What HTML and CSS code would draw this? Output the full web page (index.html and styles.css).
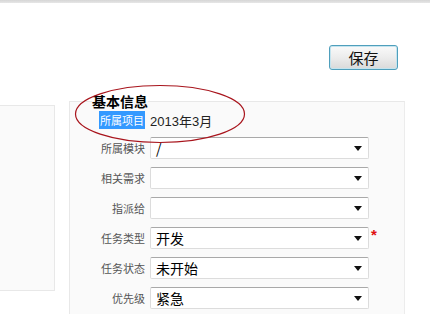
FILE: index.html
```html
<!DOCTYPE html>
<html>
<head>
    <meta charset="UTF-8">
    <title>任务</title>
    <link rel="stylesheet" href="styles.css">
</head>
<body>
    <div class="topbar"></div>
    <div class="toolbar">
        <button class="btn-save">保存</button>
    </div>
    <div class="main">
        <div class="side"></div>
        <fieldset class="panel">
            <legend>基本信息</legend>
            <div class="row first">
                <label><span class="sel">所属项目</span></label>
                <div class="value">2013年3月</div>
            </div>
            <div class="row">
                <label>所属模块</label>
                <div class="select"><span>/</span><i class="caret"></i></div>
            </div>
            <div class="row">
                <label>相关需求</label>
                <div class="select"><span></span><i class="caret"></i></div>
            </div>
            <div class="row">
                <label>指派给</label>
                <div class="select"><span></span><i class="caret"></i></div>
            </div>
            <div class="row">
                <label>任务类型</label>
                <div class="select"><span>开发</span><i class="caret"></i></div>
                <b class="star">*</b>
            </div>
            <div class="row">
                <label>任务状态</label>
                <div class="select"><span>未开始</span><i class="caret"></i></div>
            </div>
            <div class="row">
                <label>优先级</label>
                <div class="select"><span>紧急</span><i class="caret"></i></div>
            </div>
        </fieldset>
    </div>
    <svg class="mark" width="172" height="60" viewBox="0 0 172 60">
        <ellipse cx="86" cy="30" rx="84.5" ry="28.5" fill="none" stroke="#a8141c" stroke-width="1.2"/>
    </svg>
</body>
</html>
```

FILE: styles.css
```css
body {
    font-family: "Liberation Sans", "Noto Sans CJK SC", sans-serif;
    background-color: #fff;
    margin: 0;
    padding: 0;
    color: #222;
    overflow: hidden;
}
.topbar {
    height: 3px;
    background: linear-gradient(to bottom, #d6d6d6, #e6e6e6);
}
.toolbar {
    display: flex;
    justify-content: flex-end;
    padding: 42px 32px 0 0;
}
.btn-save {
    width: 69px;
    height: 25px;
    padding: 0;
    border: 1px solid #4f9fbc;
    border-radius: 3px;
    background: linear-gradient(to bottom, #fafafa, #ececec 50%, #d9d9d9);
    box-shadow: inset 0 0 0 1px #c4e4ef;
    font-family: "Noto Sans CJK SC", sans-serif;
    font-size: 15px;
    color: #111;
    line-height: 21px;
}
.main {
    display: flex;
    align-items: flex-start;
    margin-top: 24px;
}
.side {
    width: 55px;
    height: 186px;
    box-sizing: border-box;
    margin-top: 11px;
    border: 1px solid #e8e8e8;
    border-left: none;
    background: #fafafa;
}
.panel {
    margin: 0 0 0 14px;
    padding: 0 0 20px 0;
    width: 336px;
    box-sizing: border-box;
    min-width: 0;
    border: 1px solid #e8e8e8;
    border-right-color: #ececec;
    background: #fafafa;
}
.panel legend {
    margin-left: 22px;
    padding: 0;
    font-family: "Noto Sans CJK SC", sans-serif;
    font-weight: bold;
    font-size: 14px;
    line-height: 14px;
    color: #000;
}
.row {
    display: grid;
    grid-template-columns: 75px 219px auto;
    column-gap: 5px;
    align-items: center;
    height: 22px;
    margin-top: 8px;
}
.row.first {
    margin-top: 1px;
    margin-bottom: -2px;
}
.row label {
    text-align: right;
    font-family: "Noto Sans CJK SC", sans-serif;
    font-size: 11px;
    color: #555;
}
.sel {
    background: #3399ff;
    color: #fff;
    padding: 1px 1px;
}
.value {
    font-size: 13px;
    color: #222;
}
.select {
    display: flex;
    align-items: center;
    justify-content: space-between;
    height: 22px;
    box-sizing: border-box;
    padding: 0 6px 0 5px;
    background: #fff;
    border: 1px solid #dcdcdc;
    border-top-color: #a9a9a9;
    border-radius: 2px;
    font-family: "Noto Sans CJK SC", sans-serif;
    font-size: 14px;
    color: #000;
}
.caret {
    width: 0;
    height: 0;
    border-left: 4px solid transparent;
    border-right: 4px solid transparent;
    border-top: 5px solid #111;
}
.star {
    align-self: start;
    margin-top: 2px;
    margin-left: -3px;
    color: #e01010;
    font-size: 15px;
    line-height: 12px;
}
.mark {
    position: absolute;
    left: 74px;
    top: 84px;
}
```
